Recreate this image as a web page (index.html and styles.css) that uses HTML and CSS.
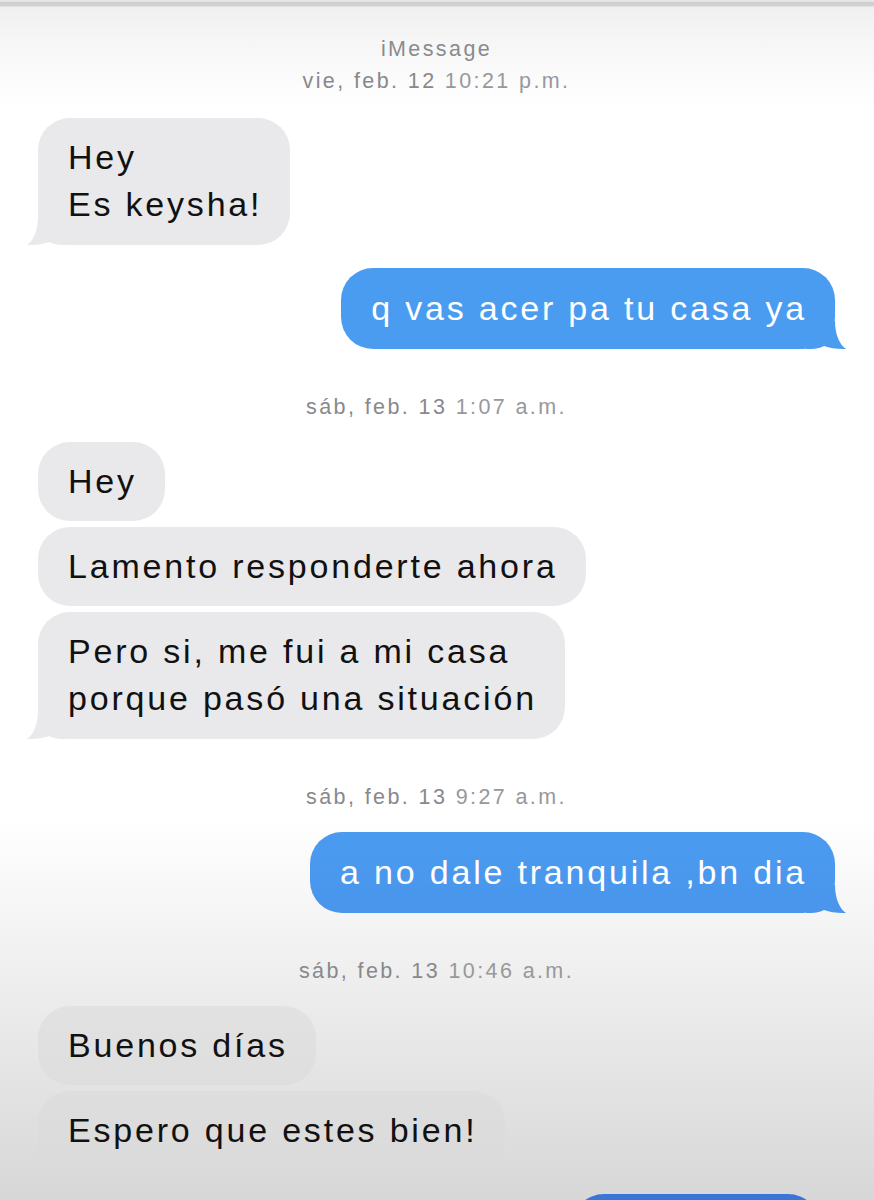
FILE: index.html
```
<!DOCTYPE html>
<html>
<head>
    <meta charset="utf-8">
    <title>iMessage</title>
    <link rel="stylesheet" href="styles.css">
</head>
<body>
    <div class="screen">
        <div class="thread">

            <!-- conversation header -->
            <div class="stamp top">
                <div class="service">iMessage</div>
                <div><span class="day">vie, feb. 12</span> 10:21 p.m.</div>
            </div>

            <div class="msg in tail">Hey<br>Es keysha!</div>
            <div class="msg out tail">q vas acer pa tu casa ya</div>

            <div class="stamp"><span class="day">sáb, feb. 13</span> 1:07 a.m.</div>

            <div class="msg in">Hey</div>
            <div class="msg in">Lamento responderte ahora</div>
            <div class="msg in tail">Pero si, me fui a mi casa<br>porque pasó una situación</div>

            <div class="stamp"><span class="day">sáb, feb. 13</span> 9:27 a.m.</div>

            <div class="msg out tail">a no dale tranquila ,bn dia</div>

            <div class="stamp"><span class="day">sáb, feb. 13</span> 10:46 a.m.</div>

            <div class="msg in">Buenos días</div>
            <div class="msg in tail">Espero que estes bien!</div>
            <!-- next bubble, cut off by the bottom of the screen -->
            <div class="msg out cut"></div>

        </div>
    </div>
</body>
</html>
```

FILE: styles.css
```
body
{
    margin: 0;
    font-family: "Liberation Sans", Arial, sans-serif;
    background: #FFFFFF;
}
.screen
{
    height: 1200px;
    overflow: hidden;
    background: linear-gradient(to bottom, #e6e6e6 0, #e6e6e6 2px, #cdcdcd 2px, #d2d2d2 6px, #f0f0f0 7px, #f6f6f6 40px, #ffffff 110px, #ffffff 820px, #ececec 1000px, #d7d7d7 1200px);
}
.thread
{
    display: flex;
    flex-direction: column;
    padding: 0 39px 0 38px;
}

/* timestamps */
.stamp
{
    align-self: center;
    text-align: center;
    color: #98989c;
    font-size: 21.5px;
    letter-spacing: 2.4px;
    line-height: 26px;
    margin: 45px 0 22px;
}
.stamp .day
{
    color: #88888d;
}
.stamp.top
{
    margin: 33px 0 21px;
    line-height: 32px;
}
.service
{
    color: #8a8a8e;
}

/* bubbles */
.msg
{
    position: relative;
    max-width: 560px;
    padding: 16px 28px 16px 30px;
    border-radius: 32px;
    font-size: 34px;
    line-height: 47px;
    letter-spacing: 2.8px;
}
.msg + .msg
{
    margin-top: 6px;
}
.in + .out,
.out + .in
{
    margin-top: 23px;
}
.in.tail
{
    padding-bottom: 17px;
}
/* fixed gradients follow the shading of the photo */
.in
{
    align-self: flex-start;
    background: linear-gradient(to bottom, #e9e9eb 820px, #e2e2e3 1000px, #d9d9d9 1200px) fixed;
    color: #111111;
}
.out
{
    align-self: flex-end;
    padding-top: 17px;
    padding-bottom: 17px;
    background: linear-gradient(to bottom, #4a9cf0 820px, #4890e8 1000px, #3a74d4 1200px) fixed;
    color: #FFFFFF;
}
.tail::before
{
    content: "";
    position: absolute;
    bottom: 0;
    width: 40px;
    height: 28px;
    background: inherit;
}
.in.tail::before
{
    left: -11px;
    clip-path: path("M11 0 C11 14 6 24 0 28 C8 28.5 16 27 22 25 C26 27.5 32 28 40 28 L40 0 Z");
}
.out.tail::before
{
    right: -11px;
    clip-path: path("M29 0 C29 14 34 24 40 28 C32 28.5 24 27 18 25 C14 27.5 8 28 0 28 L0 0 Z");
}
.cut
{
    width: 190px;
    height: 47px;
    margin-right: 15px;
}
```
